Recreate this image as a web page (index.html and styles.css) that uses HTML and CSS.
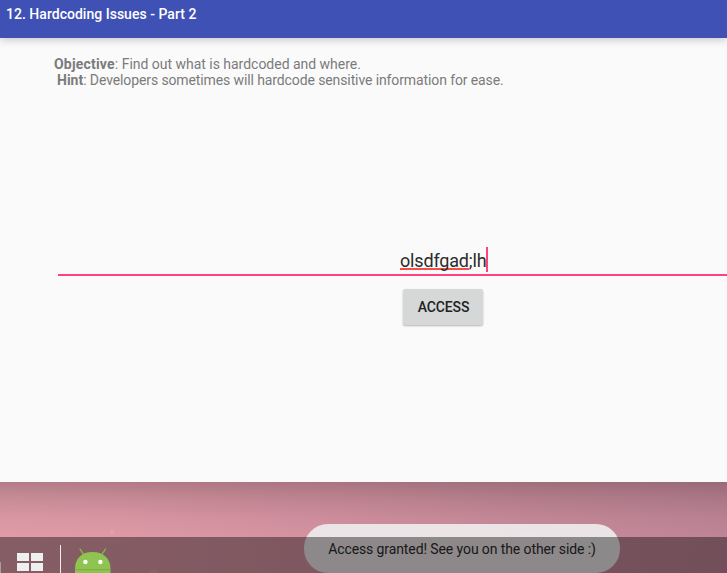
FILE: index.html
```html
<!DOCTYPE html>
<html lang="en">
<head>
<meta charset="utf-8">
<title>Hardcoding Issues</title>
<link rel="stylesheet" href="styles.css">
</head>
<body>
<div class="desktop">
  <section class="window">
    <header class="app-bar"><h1>12. Hardcoding Issues - Part 2</h1></header>
    <main class="content">
      <div class="notes">
        <p class="objective"><b>Objective</b>: Find out what is hardcoded and where.</p>
        <p class="hint"><b>Hint</b>: Developers sometimes will hardcode sensitive information for ease.</p>
      </div>
      <div class="field"><span class="value"><span class="misspelled">olsdfgad</span>;lh</span><span class="caret"></span></div>
      <button class="access" type="button">ACCESS</button>
    </main>
  </section>
  <div class="toast"><span>Access granted! See you on the other side :)</span></div>
  <footer class="taskbar">
    <span class="edge"></span>
    <svg class="grid-icon" width="26" height="18" viewBox="0 0 26 18"><path fill="#efefef" d="M0 0h12v8H0zM14 0h12v8H14zM0 10h12v8H0zM14 10h12v8H14z"/></svg>
    <span class="divider"></span>
    <svg class="android" width="38" height="26" viewBox="0 0 38 26">
      <path d="M6 2l4 6M31.500 2l-4 6" stroke="#8bbd4c" stroke-width="1.300" stroke-linecap="round"/>
      <path fill="#8fc451" d="M1 26v-4C1 11 8 5 18.500 5S36.500 11 36.500 22v4z"/>
      <path fill="#7fad48" d="M1 22h35.500v1.300H1z"/>
      <circle cx="11.400" cy="15" r="2.200" fill="#fff"/><circle cx="26.400" cy="15" r="2.200" fill="#fff"/>
    </svg>
  </footer>
</div>
</body>
</html>
```
FILE: styles.css
```css
* { box-sizing: border-box; }
body { margin: 0; overflow: hidden; font-family: Roboto, sans-serif; }
h1, p { margin: 0; white-space: nowrap; }
.desktop {
  position: relative;
  display: flex;
  flex-direction: column;
  width: 727px;
  height: 573px;
  overflow: hidden;
  background:
    radial-gradient(circle at 112px 532px, rgba(240,165,172,.9) 0, rgba(240,165,172,0) 3px),
    radial-gradient(circle at 154px 573px, rgba(255,185,190,.35) 0, rgba(255,185,190,0) 6px),
    linear-gradient(to bottom, rgba(0,0,0,.2) 482px, rgba(0,0,0,.1) 499px, rgba(0,0,0,.03) 518px, rgba(0,0,0,0) 535px),
    linear-gradient(100deg, #e09ea9 0, #dd99a6 25%, #d391a0 50%, #c78a9a 75%, #be8496 100%);
}
.window { height: 482px; background: #fafafa; }
.app-bar {
  height: 38px;
  padding: 6px 0 0 6px;
  background: #3f51b5;
  color: #fff;
  box-shadow: 0 2px 8px rgba(0,0,0,.2);
}
.app-bar h1 { font-size: 14px; line-height: 17px; font-weight: 500; letter-spacing: .02px; }
.content { display: flex; flex-direction: column; padding: 18px 0 0 54px; }
.notes { height: 188px; color: #7b7b7b; font-size: 14px; line-height: 17px; }
.notes p { height: 16px; }
.objective { letter-spacing: -.02px; }
.objective b { letter-spacing: .2px; }
.hint { padding-left: 3px; letter-spacing: -.11px; }
.hint b { letter-spacing: 0; }
.field {
  display: flex;
  align-items: flex-start;
  height: 32px;
  margin-left: 4px;
  padding: 3px 0 0 342px;
  border-bottom: 2px solid #ff4081;
  color: #2b2b2b;
  font-size: 18px;
  line-height: 28px;
  letter-spacing: -.17px;
}
.misspelled { display: inline-block; height: 23px; line-height: 28px; border-bottom: 2px solid #f54e48; vertical-align: top; }
.value { width: 86px; white-space: nowrap; }
.caret { width: 2px; height: 25px; background: #ff4081; }
.access {
  width: 80px;
  height: 36px;
  margin: 13px 0 0 349px;
  padding: 0 0 0 1px;
  border: 0;
  border-radius: 2px;
  background: #d6d7d7;
  box-shadow: 0 1px 2px rgba(0,0,0,.28);
  color: #212121;
  font: 500 14px Roboto, sans-serif;
  letter-spacing: -.15px;
}
.toast {
  position: absolute;
  left: 304px;
  top: 524px;
  display: flex;
  justify-content: center;
  align-items: center;
  width: 316px;
  height: 49px;
  border-radius: 24px;
  background: rgba(238,238,238,.9);
  color: #2b2b2b;
  font-size: 14px;
  letter-spacing: -.1px;
  white-space: nowrap;
}
.taskbar {
  position: relative;
  display: flex;
  align-items: flex-start;
  height: 36px;
  margin-top: 55px;
  background: rgba(0,0,0,.4);
}
.edge { width: 1px; height: 11px; margin-top: 25px; background: #a99da0; }
.grid-icon { margin: 16px 0 0 16px; }
.divider { width: 1px; height: 28px; margin: 8px 0 0 17px; background: #f2eeee; }
.android { margin: 10px 0 0 13px; fill: none; }
```
